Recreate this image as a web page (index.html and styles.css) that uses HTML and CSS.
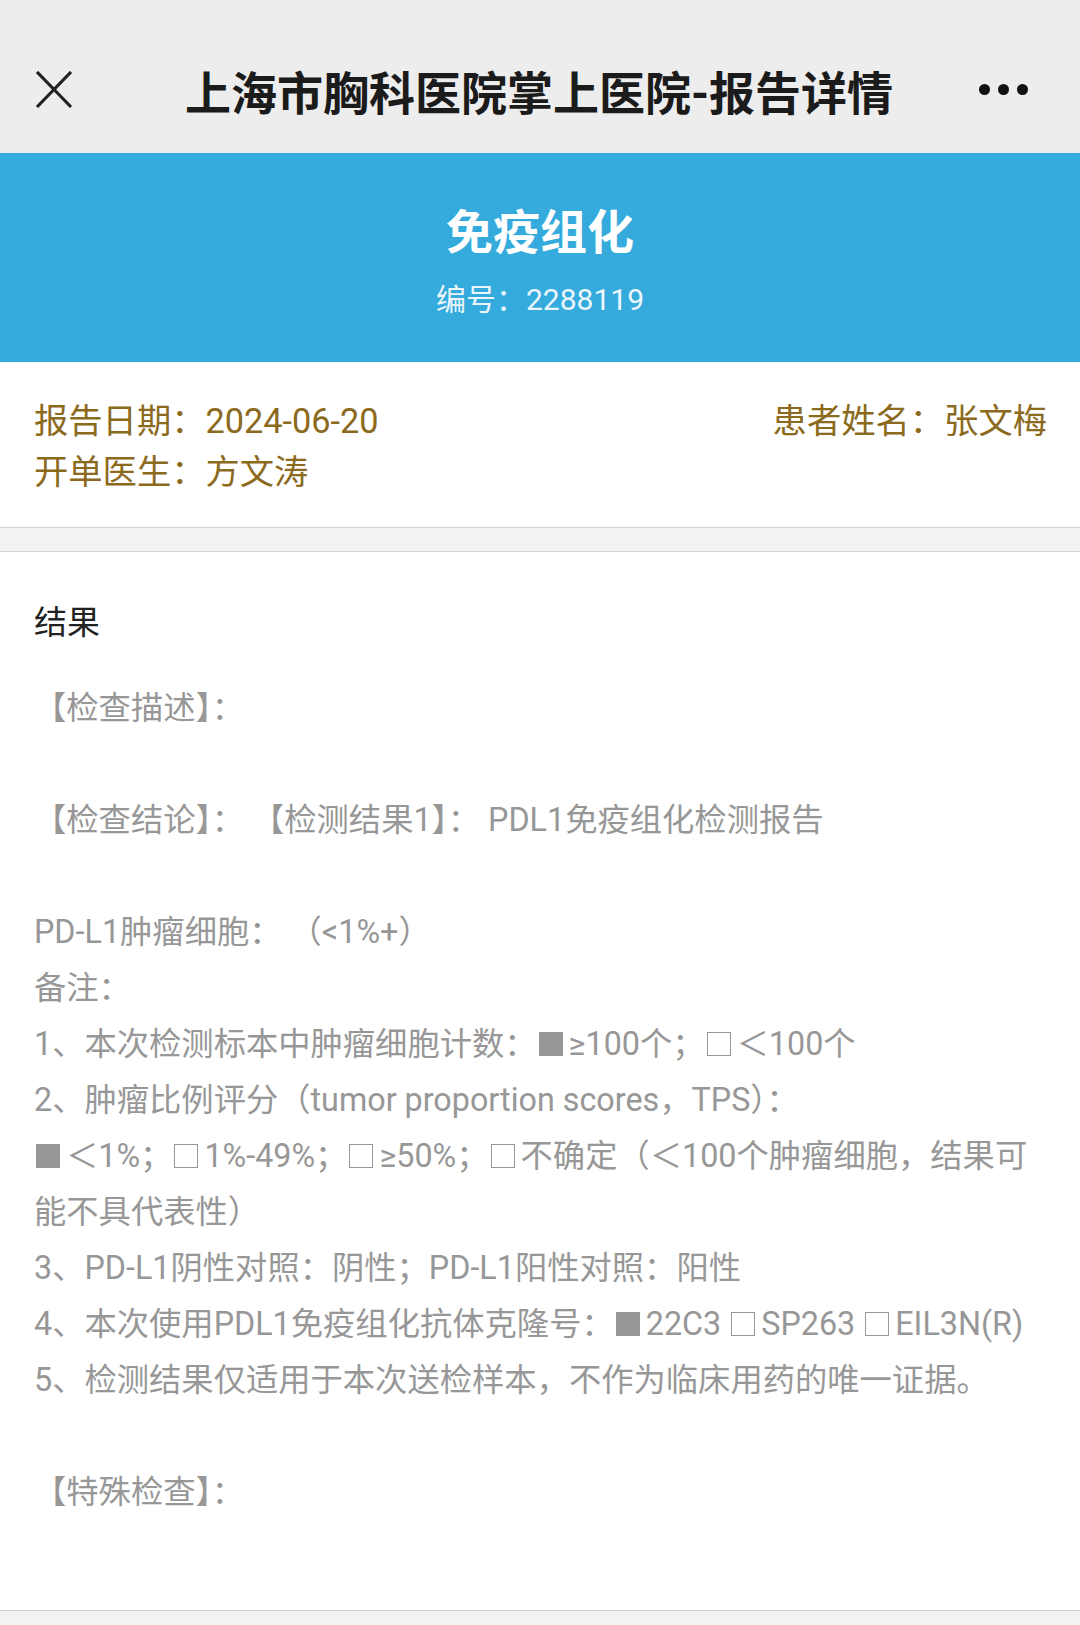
FILE: index.html
```html
<!DOCTYPE html>
<html lang="zh-CN">
<head>
<meta charset="utf-8">
<title>报告详情</title>
<link rel="stylesheet" href="styles.css">
</head>
<body>
<div class="page">
  <header class="topbar">
    <div class="close">
      <svg width="38" height="38" viewBox="0 0 38 38"><path d="M2 1 L36 36 M36 1 L2 36" stroke="#222" stroke-width="3.2" fill="none"/></svg>
    </div>
    <div class="nav-title">上海市胸科医院掌上医院-报告详情</div>
    <div class="more"><span></span><span></span><span></span></div>
  </header>

  <section class="banner">
    <div class="banner-title">免疫组化</div>
    <div class="banner-sub">编号：2288119</div>
  </section>

  <section class="info">
    <div class="info-row">
      <span>报告日期：2024-06-20</span>
      <span>患者姓名：张文梅</span>
    </div>
    <div class="info-row">
      <span>开单医生：方文涛</span>
    </div>
  </section>

  <div class="sep"></div>

  <section class="result">
    <div class="result-title">结果</div>
    <div class="result-body">
      <p>【检查描述】：</p>
      <p class="blank">&nbsp;</p>
      <p>【检查结论】：&nbsp;【检测结果1】：&nbsp;PDL1免疫组化检测报告</p>
      <p class="blank">&nbsp;</p>
      <p>PD-L1肿瘤细胞： （&lt;1%+）</p>
      <p>备注：</p>
      <p>1、本次检测标本中肿瘤细胞计数：<span class="box filled"></span>≥100个；<span class="box"></span>＜100个</p>
      <p>2、肿瘤比例评分（tumor proportion scores，TPS）：</p>
      <p><span class="box filled"></span>＜1%；<span class="box"></span>1%-49%；<span class="box"></span>≥50%；<span class="box"></span>不确定（＜100个肿瘤细胞，结果可能不具代表性）</p>
      <p>3、PD-L1阴性对照：阴性；PD-L1阳性对照：阳性</p>
      <p>4、本次使用PDL1免疫组化抗体克隆号：<span class="box filled"></span>22C3 <span class="box"></span>SP263 <span class="box"></span>EIL3N(R)</p>
      <p>5、检测结果仅适用于本次送检样本，不作为临床用药的唯一证据。</p>
      <p class="blank">&nbsp;</p>
      <p>【特殊检查】：</p>
    </div>
  </section>

  <div class="footer-gap"></div>
</div>
</body>
</html>
```

FILE: styles.css
```css
* { box-sizing: border-box; }
html, body { margin: 0; padding: 0; background: #ffffff; }
body {
  font-family: Roboto, "Noto Sans CJK SC", "Noto Sans", sans-serif;
  width: 1080px;
}
.page { display: flex; flex-direction: column; min-height: 1625px; }

.topbar {
  background: #ededed;
  height: 153px;
  padding-top: 26px;
  display: flex;
  align-items: center;
}
.close {
  width: 38px; height: 38px;
  margin-left: 35px;
  display: flex;
}
.nav-title {
  flex: 1;
  text-align: center;
  font-size: 46px;
  font-weight: 700;
  color: #1b1b1b;
  padding-left: 26px;
}
.more {
  display: flex;
  gap: 8px;
  margin-right: 52px;
}
.more span {
  width: 11px; height: 11px;
  border-radius: 50%;
  background: #111;
}

.banner {
  background: #35aadc;
  height: 209px;
  padding-top: 50px;
  display: flex;
  flex-direction: column;
  align-items: center;
  color: #fff;
}
.banner-title {
  font-size: 47px;
  font-weight: 700;
  line-height: 60px;
}
.banner-sub {
  margin-top: 17px;
  font-size: 30px;
  line-height: 40px;
  color: #eaf6fc;
}

.info {
  padding: 34px 33px 29px 34px;
  color: #8b6a1e;
  font-size: 34.3px;
  background: #fff;
}
.info-row {
  display: flex;
  justify-content: space-between;
  line-height: 51px;
}

.sep {
  height: 25px;
  background: #f2f2f2;
  border-top: 1px solid #d3d3d3;
  border-bottom: 1px solid #d3d3d3;
}

.result {
  padding: 49px 33px 90px 34px;
  background: #fff;
  border-bottom: 1px solid #d3d3d3;
}
.result-title {
  font-size: 33px;
  line-height: 44px;
  color: #222;
}
.result-body {
  margin-top: 35px;
  font-size: 32.3px;
  line-height: 56px;
  color: #979797;
}
.result-body p { margin: 0; }
.result-body p.blank { height: 56px; }

.box {
  display: inline-block;
  width: 24px;
  height: 24px;
  border: 1.5px solid #979797;
  vertical-align: -1px;
  margin: 0 6px 0 2px;
}
.box.filled { background: #979797; }

.footer-gap {
  flex: 1;
  background: #f2f2f2;
}
```
